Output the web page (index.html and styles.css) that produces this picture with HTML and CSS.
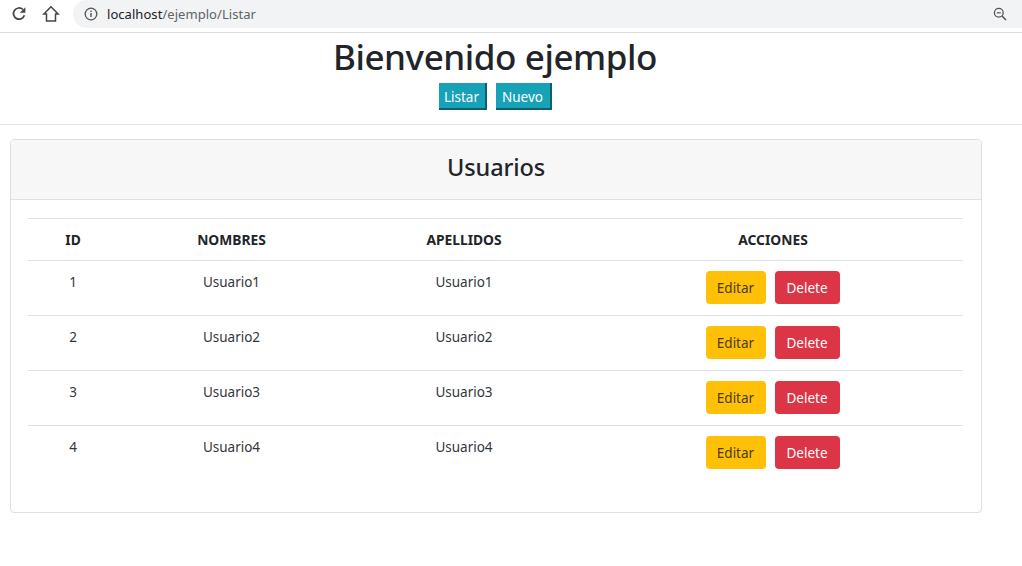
FILE: index.html
```html
<!DOCTYPE html>
<html lang="es">
<head>
<meta charset="utf-8">
<title>Listar</title>
<link rel="stylesheet" href="styles.css">
</head>
<body>
<div class="chrome">
  <svg class="ic ic-reload" width="16" height="16" viewBox="0 0 16 16"><path d="M13.4 9.2A5.6 5.6 0 1 1 11.8 3.4" fill="none" stroke="#454545" stroke-width="1.7"/><path d="M14.4 1.2v5.6H8.8z" fill="#454545"/></svg>
  <svg class="ic ic-home" width="18" height="18" viewBox="0 0 18 18"><path d="M9 1.8 1.9 8.9h2.6v7h9v-7h2.6z" fill="none" stroke="#454545" stroke-width="1.5" stroke-linejoin="miter"/></svg>
  <div class="omnibox">
    <svg class="ic-info" width="14" height="14" viewBox="0 0 14 14"><circle cx="7" cy="7" r="5.8" fill="none" stroke="#555" stroke-width="1.3"/><rect x="6.3" y="6" width="1.4" height="4" fill="#555"/><rect x="6.3" y="3.6" width="1.4" height="1.4" fill="#555"/></svg>
    <span class="url"><span class="host">localhost</span>/ejemplo/Listar</span>
    <svg class="ic-zoom" width="14" height="14" viewBox="0 0 14 14"><circle cx="5.8" cy="5.8" r="4.4" fill="none" stroke="#555" stroke-width="1.3"/><path d="M3.8 5.8h4" stroke="#555" stroke-width="1.2"/><path d="m9 9 4 4" stroke="#555" stroke-width="1.6"/></svg>
  </div>
</div>
<header class="top">
  <h1>Bienvenido ejemplo</h1>
  <nav class="top-nav"><a class="nav-btn nav-listar">Listar</a><a class="nav-btn nav-nuevo">Nuevo</a></nav>
</header>
<section class="card">
  <div class="card-head"><h2>Usuarios</h2></div>
  <div class="card-body">
    <table>
      <colgroup><col class="c1"><col class="c2"><col class="c3"><col class="c4"></colgroup>
      <thead><tr><th>ID</th><th>NOMBRES</th><th>APELLIDOS</th><th>ACCIONES</th></tr></thead>
      <tbody>
        <tr><td>1</td><td>Usuario1</td><td>Usuario1</td><td><div class="acts"><a class="btn edit">Editar</a><a class="btn del">Delete</a></div></td></tr>
        <tr><td>2</td><td>Usuario2</td><td>Usuario2</td><td><div class="acts"><a class="btn edit">Editar</a><a class="btn del">Delete</a></div></td></tr>
        <tr><td>3</td><td>Usuario3</td><td>Usuario3</td><td><div class="acts"><a class="btn edit">Editar</a><a class="btn del">Delete</a></div></td></tr>
        <tr><td>4</td><td>Usuario4</td><td>Usuario4</td><td><div class="acts"><a class="btn edit">Editar</a><a class="btn del">Delete</a></div></td></tr>
      </tbody>
    </table>
  </div>
</section>
</body>
</html>
```

FILE: styles.css
```css
* { box-sizing: border-box; }
html, body { margin: 0; height: 100%; overflow: hidden; }
body { font-family: "Noto Sans", "Open Sans", sans-serif; color: #212529; background: #fff; }
.chrome { height: 33px; border-bottom: 1px solid #dcdcdc; display: flex; align-items: flex-start; }
.ic-reload { margin: 6px 0 0 11px; }
.ic-home { margin: 5px 0 0 15px; }
.omnibox { margin: 0 0 0 13px; flex: 1; height: 28px; background: #f1f3f4; border-radius: 14px 0 0 14px; display: flex; align-items: center; padding: 0 15px 0 11px; }
.ic-info { flex: none; }
.url { font-size: 13px; color: #5f6368; margin-left: 9px; flex: 1; letter-spacing: .05px; }
.host { color: #202124; }
.top { width: 990px; height: 92px; text-align: center; }
h1 { margin: 0; font-size: 35px; font-weight: 500; line-height: 47px; letter-spacing: -.43px; }
.top-nav { display: flex; justify-content: center; gap: 9px; margin-top: 3px; }
.nav-btn { background: #17a2b8; color: #fff; font-size: 13.5px; height: 27px; line-height: 29px; text-align: center; border-right: 2px solid #0d5f6c; border-bottom: 2px solid #0d5f6c; }
.nav-listar { width: 48px; }
.nav-nuevo { width: 56px; }
.card { margin: 14px 0 0 10px; width: 972px; height: 374px; border: 1px solid #dfdfdf; border-radius: 4px; }
.top::after { content: ""; display: block; width: 1022px; height: 1px; background: #e2e2e2; margin-top: 14px; }
.card-head { height: 60px; background: #f7f7f7; border-bottom: 1px solid #dfdfdf; border-radius: 3px 3px 0 0; display: flex; align-items: center; justify-content: center; padding-bottom: 6px; }
h2 { margin: 0; font-size: 23.5px; font-weight: 500; line-height: 32px; letter-spacing: -.15px; }
.card-body { padding: 18px 18px 0 17px; }
table { width: 935px; border-collapse: collapse; table-layout: fixed; font-size: 13.5px; }
.c1 { width: 90px; }
.c2 { width: 227px; }
.c3 { width: 238px; }
.c4 { width: 380px; }
th { height: 42px; border-top: 1px solid #dee2e6; border-bottom: 1px solid #dee2e6; font-weight: 700; font-size: 13.8px; text-align: center; padding: 0; }
td { height: 55px; border-bottom: 1px solid #dee2e6; text-align: center; vertical-align: top; padding: 11px 0 0; line-height: 20px; color: #33383c; }
tbody tr:last-child td { border-bottom: 0; }
.acts { display: flex; justify-content: center; gap: 9px; margin: -1px 0 0 -1px; }
.btn { display: block; height: 33px; line-height: 34px; border-radius: 4px; font-size: 13.5px; }
.edit { width: 60px; background: #ffc107; color: #4a3c10; }
.del { width: 65px; background: #dc3545; color: #fff; }
```
